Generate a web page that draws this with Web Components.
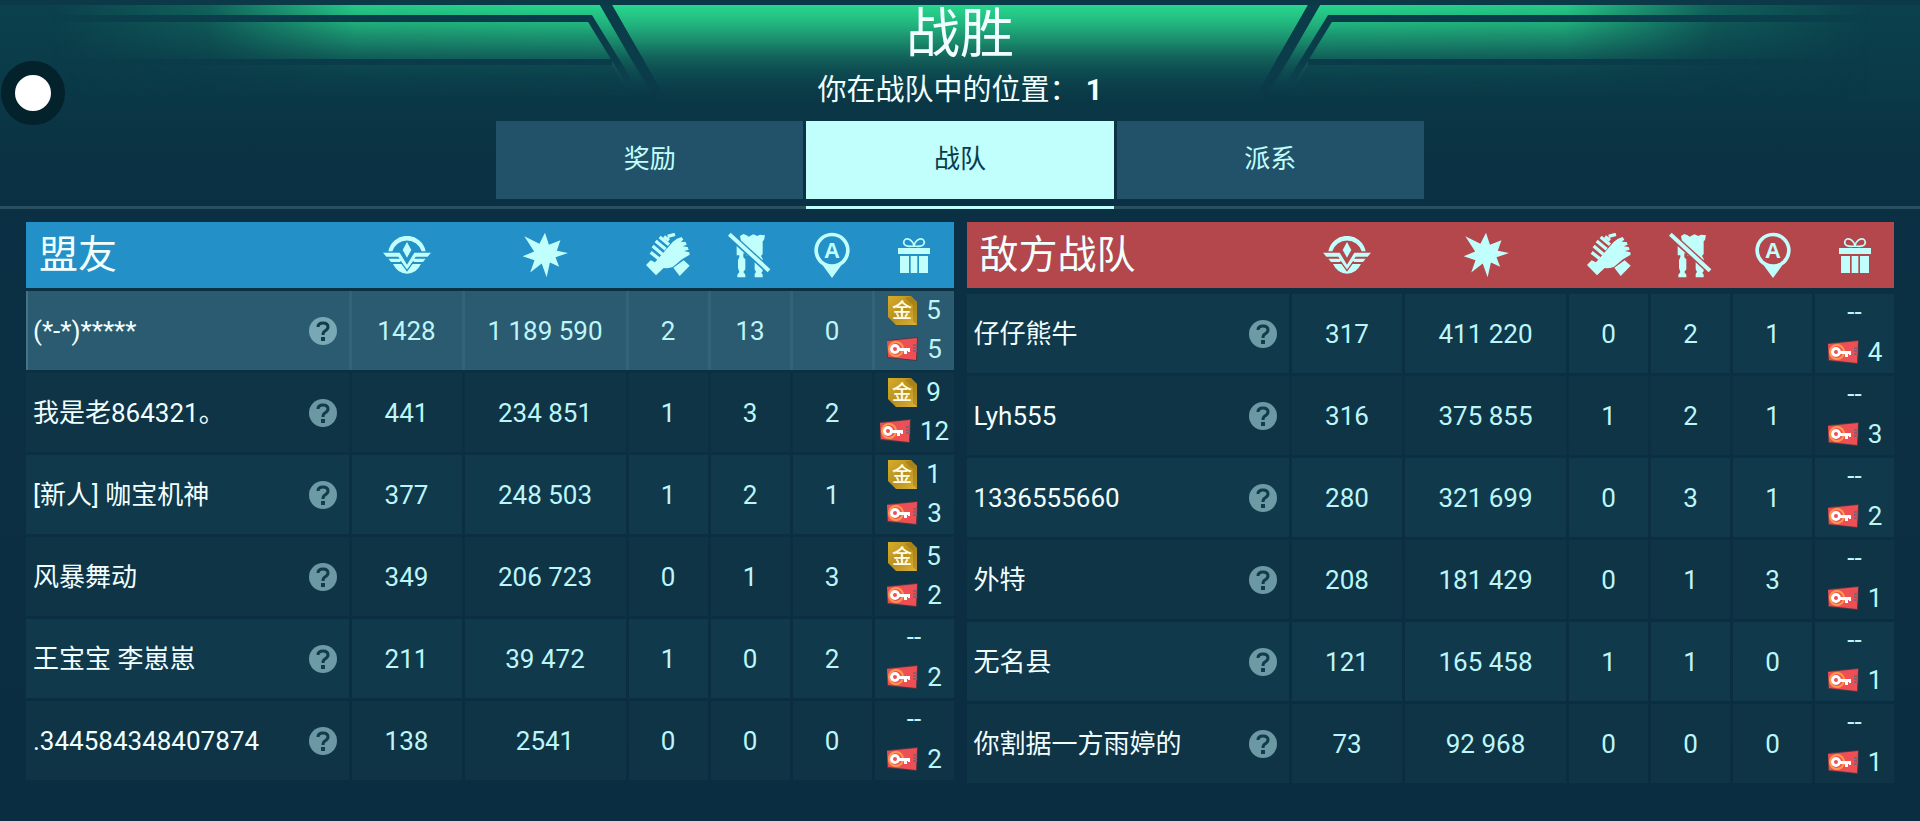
<!DOCTYPE html>
<html lang="zh-CN">
<head>
<meta charset="utf-8">
<meta name="viewport" content="width=device-width, initial-scale=1">
<title>战胜</title>
<style>
    :root {
        --ice: #c0fffb;
        --text: #f2ffff;
        --value: #bdf6f8;
        --tab: #22516a;
        --line: #28505f;
        --dark: #0b3c4a;
        --ally: #2490c8;
        --enemy: #b3474c;
        --row-odd: #10394b;
        --row-even: #0f3446;
        --row-own: #2b5b70;
    }

    html, body {
        margin: 0;
        min-height: 100%;
    }

    body {
        min-height: 100vh;
        background: linear-gradient(#0b414d 0, #0a3a48 80px, #0a3343 140px, #0b3044 210px, #0b2d42 100%);
        color: var(--text);
        font: 26px/32px Roboto, "Noto Sans CJK SC", sans-serif;
    }
</style>
</head>
<body>
<battle-results></battle-results>

<template id="battle-results">
    <style>
        :host {
            display: block;
            position: relative;
        }

        header {
            position: relative;
            text-align: center;
        }

        h1 {
            margin: 0;
            font-size: 54px;
            line-height: 70px;
            font-weight: 400;
        }

        .place {
            margin: 0;
            padding: 2px 0 13px;
            font-size: 29px;
            line-height: 36px;
        }

        main {
            display: flex;
            align-items: flex-start;
            gap: 13px;
            padding: 13px 26px 0;
        }

        team-table {
            flex: 1;
        }
    </style>
    <top-banner></top-banner>
    <header>
        <h1>战胜</h1>
        <p class="place">你在战队中的位置： <b>1</b></p>
        <tab-bar>
            <tab-item>奖励</tab-item>
            <tab-item active>战队</tab-item>
            <tab-item>派系</tab-item>
        </tab-bar>
    </header>
    <main>
        <team-table side="ally">盟友</team-table>
        <team-table side="enemy">敌方战队</team-table>
    </main>
    <touch-dot></touch-dot>
</template>

<template id="top-banner">
    <style>
        :host {
            display: block;
            position: absolute;
            inset: 0 0 auto;
        }

        svg {
            display: block;
            width: 100%;
        }
    </style>
    <svg viewBox="0 0 1920 110" aria-hidden="true">
        <defs>
            <linearGradient id="green" gradientUnits="userSpaceOnUse" x1="0" y1="5" x2="0" y2="100">
                <stop offset="0" stop-color="#28d88e"/>
                <stop offset=".2" stop-color="#22b57e"/>
                <stop offset=".4" stop-color="#1a8a6c" stop-opacity=".95"/>
                <stop offset=".56" stop-color="#146a5e" stop-opacity=".8"/>
                <stop offset=".75" stop-color="#105a58" stop-opacity=".4"/>
                <stop offset="1" stop-color="#0c4450" stop-opacity="0"/>
            </linearGradient>
            <linearGradient id="side" gradientUnits="userSpaceOnUse" x1="50" y1="0" x2="660" y2="0">
                <stop offset="0" stop-color="#fff" stop-opacity="0"/>
                <stop offset=".26" stop-color="#fff" stop-opacity=".22"/>
                <stop offset=".5" stop-color="#fff" stop-opacity=".9"/>
                <stop offset="1" stop-color="#fff"/>
            </linearGradient>
            <linearGradient id="down" gradientUnits="userSpaceOnUse" x1="0" y1="5" x2="0" y2="92">
                <stop offset="0" stop-color="#0b3c4a"/>
                <stop offset=".65" stop-color="#0b3c4a"/>
                <stop offset="1" stop-color="#0b3c4a" stop-opacity="0"/>
            </linearGradient>
            <mask id="fade" maskUnits="userSpaceOnUse" x="0" y="0" width="960" height="110">
                <rect width="960" height="110" fill="url(#side)"/>
            </mask>
            <g id="wing">
                <g mask="url(#fade)">
                    <path d="M40 5H600L656 100H40Z" fill="url(#green)"/>
                    <path d="M40 65H612L628 95H40Z" fill="#0b3c4a" opacity=".45"/>
                    <path d="M40 18.500H590L634 90" fill="none" stroke="url(#down)" stroke-width="7"/>
                    <path d="M40 62H612" stroke="#0b3c4a" stroke-width="6"/>
                </g>
                <path d="M600 5H612L662 92H650Z" fill="url(#down)"/>
            </g>
        </defs>
        <rect width="1920" height="5" fill="#0c3947"/>
        <path d="M612 5H1308L1254 100H666Z" fill="url(#green)"/>
        <use href="#wing"/>
        <use href="#wing" transform="translate(1920) scale(-1 1)"/>
    </svg>
</template>

<template id="tab-bar">
    <style>
        :host {
            display: block;
            border-bottom: 3px solid var(--line);
        }

        div {
            display: grid;
            grid-template-columns: repeat(3, 1fr);
            gap: 3px;
            max-width: 928px;
            margin: 0 auto;
            padding-bottom: 7px;
        }
    </style>
    <div role="tablist"><slot></slot></div>
</template>

<template id="tab-item">
    <style>
        :host {
            display: block;
            position: relative;
        }

        button {
            display: block;
            width: 100%;
            height: 78px;
            border: 0;
            padding: 0 0 2px;
            background: var(--tab);
            color: var(--ice);
            font: inherit;
            cursor: pointer;
        }

        :host([active]) button {
            background: var(--ice);
            color: var(--dark);
        }

        /* marker drawn over the bar's bottom line */
        :host([active])::after {
            content: "";
            position: absolute;
            inset: auto 0 -10px;
            height: 3px;
            background: var(--ice);
        }
    </style>
    <button type="button" role="tab"><slot></slot></button>
</template>

<template id="team-table">
    <style>
        :host {
            display: block;
            --head: var(--ally);
        }

        :host([side="enemy"]) {
            --head: var(--enemy);
        }

        table {
            width: 100%;
            table-layout: fixed;
            border-collapse: separate;
            border-spacing: 0;
        }

        .score { width: 113px; }
        .damage { width: 164px; }
        .small { width: 82px; }

        th {
            height: 66px;
            padding: 0 0 0 3px;
            background: var(--head);
            font-weight: 400;
        }

        th:first-child {
            padding-left: 13px;
            text-align: left;
            font-size: 39px;
            line-height: 48px;
        }

        td {
            height: 79px;
            padding: 0;
            border-top: 3px solid transparent;
            border-left: 3px solid transparent;
            background: var(--row-odd) padding-box;
            color: var(--value);
            text-align: center;
        }

        tr:nth-child(even) td {
            background-color: var(--row-even);
        }

        td:first-child {
            border-left: 0;
            color: var(--text);
        }

        :host([side="enemy"]) tr:first-child td {
            border-top-width: 6px;
        }

        tr.own td {
            background: linear-gradient(var(--row-own), var(--row-own)) padding-box, linear-gradient(transparent 3px, #316477 3px) border-box;
        }

        tr.own td:first-child {
            box-shadow: inset 2px 0 #437387;
        }

        .name {
            display: flex;
            align-items: center;
            justify-content: space-between;
            padding: 0 12px 0 7px;
        }

        .name button {
            display: flex;
            border: 0;
            padding: 0;
            background: none;
            color: rgba(170, 220, 225, .6);
            cursor: pointer;
        }

        .none {
            display: block;
            height: 39px;
            line-height: 35px;
        }
    </style>
    <table>
        <colgroup>
            <col><col class="score"><col class="damage">
            <col class="small"><col class="small"><col class="small"><col class="small">
        </colgroup>
        <thead>
            <tr>
                <th scope="col"><slot></slot></th>
                <th scope="col" aria-label="得分"><stat-icon name="wings"></stat-icon></th>
                <th scope="col" aria-label="伤害"><stat-icon name="burst"></stat-icon></th>
                <th scope="col" aria-label="助攻"><stat-icon name="hands"></stat-icon></th>
                <th scope="col" aria-label="击毁"><stat-icon name="robot"></stat-icon></th>
                <th scope="col" aria-label="信标"><stat-icon name="beacon"></stat-icon></th>
                <th scope="col" aria-label="奖励"><stat-icon name="gift"></stat-icon></th>
            </tr>
        </thead>
        <tbody></tbody>
    </table>
</template>

<template id="loot-item">
    <style>
        :host {
            display: flex;
            align-items: center;
            justify-content: center;
            gap: 9px;
            box-sizing: border-box;
            height: 39px;
            padding-bottom: 3px;
        }
    </style>
    <stat-icon></stat-icon><span><slot></slot></span>
</template>

<template id="touch-dot">
    <style>
        :host {
            position: absolute;
            top: 61px;
            left: 1px;
        }

        button {
            display: block;
            width: 64px;
            height: 64px;
            border: 14px solid #04222b;
            border-radius: 50%;
            padding: 0;
            background: #fff;
        }
    </style>
    <button type="button" aria-label="悬浮按钮"></button>
</template>

<script>
// [width, height, viewBox, markup]
const icons = {
    wings: [48, 38, '0 0 144 114', `
        <path d="M16 46A57 57 0 0 1 128 46H116A46 46 0 0 0 28 46Z"/>
        <path d="M72 18L85 42L72 65L59 42Z"/>
        <path d="M0 50H50L72 86L94 50H144L134 62H98L94 68H128L120 78H88L85 84H114Q100 113 72 113Q44 113 30 84H59L56 78H24L16 68H50L46 62H10Z"/>
        <path d="M52 76L72 104L92 76" fill="none" stroke="var(--head)" stroke-width="4"/>`],
    burst: [46, 46, '0 0 140 138', `
        <path d="M70 1L82 38L117 24L106 56L140 63L102 76L113 105L85 92L75 137L60 95L25 122L38 85L2 73L37 58L7 12L53 35Z"/>`],
    hands: [44, 44, '0 0 132 132', `
        <path d="M0 96L14 82L27 88L80 27Q92 15 107 12L112 20L104 26L119 27L122 35L110 40L125 42L128 50L114 54L130 58L131 65L108 79L84 99Q75 107 53 105L30 127Z"/>
        <path d="M82 104L113 82L131 98L101 129Z"/>
        <g fill="none" stroke="currentColor" stroke-width="10">
            <path d="M41 12L69 35M29 24L59 49M20 39L49 64M14 58L38 77"/>
            <path d="M54 11L69 22M65 10L87 4"/>
        </g>`],
    robot: [44, 46, '0 0 132 138', `
        <path d="M36 12L46 6L56 10L62 14L76 7L88 12L96 8L111 10L108 24L104 28V66L99 72L104 80V118L100 122L104 128V136H80V126L84 120L80 112V72H56V64H46V76L52 82V112L46 120L52 128V136H28V128L34 120L30 108V84L34 76V70H26V38L40 34Z"/>
        <path d="M2 6L124 117" stroke="var(--head)" stroke-width="21"/>
        <path d="M4 7L123 116" stroke="currentColor" stroke-width="12"/>`],
    beacon: [36, 46, '0 0 108 138', `
        <path d="M54 2A53 53 0 0 1 82 100L54 138L26 100A53 53 0 0 1 54 2Z"/>
        <circle cx="54" cy="55" r="42" fill="var(--head)"/>
        <text x="54" y="78" text-anchor="middle" font-family="Liberation Sans, sans-serif" font-size="66" font-weight="700">A</text>`],
    gift: [34, 36, '0 0 102 108', `
        <path d="M3 33H99V51H3ZM9 57H36V108H9ZM41 57H61V108H41ZM66 57H93V108H66Z"/>
        <path d="M51 27Q20 32 20 15Q24 1 39 8Q49 15 51 27Q53 15 63 8Q78 1 82 15Q82 32 51 27Z" fill="none" stroke="currentColor" stroke-width="5"/>`],
    help: [28, 28, '0 0 28 28', `
        <circle cx="14" cy="14" r="14"/>
        <path d="M9 10Q9 6 14 6Q19 6 19 10Q19 12 16 14Q14 15 14 18" fill="none" stroke="#123c4c" stroke-width="3"/>
        <path d="M12 20H16V24H12Z" fill="#123c4c"/>`],
    coin: [30, 30, '0 0 30 30', `
        <linearGradient id="gold" x2="1" y2="1">
            <stop offset="0" stop-color="#d9ad2b"/><stop offset=".5" stop-color="#b8901d"/><stop offset="1" stop-color="#dcb33a"/>
        </linearGradient>
        <path d="M1 1H24L30 7V30H9L1 22Z" fill="url(#gold)"/>
        <path d="M24 1L30 7V30L26 26V10L18 3Z" fill="#8e6c12" opacity=".4"/>
        <text x="15" y="23" text-anchor="middle" font-family="Noto Sans CJK SC, sans-serif" font-size="20" font-weight="500" fill="#fffbe6">金</text>`],
    card: [32, 24, '0 0 32 24', `
        <path d="M1 3L32 0L31 24L1 21Z" fill="#4c3945"/>
        <path d="M1 4L31 1L30 23L2 20Z" fill="#ee4f55"/>
        <circle cx="10" cy="12" r="7" fill="none" stroke="#ff9a4a" stroke-width="2"/>
        <circle cx="9" cy="12" r="3.500" fill="none" stroke="#fff" stroke-width="3"/>
        <path d="M12 11H24V15H22V14H21V17H18V14H12Z" fill="#fff"/>
        <path d="M27 8H31M27 11H31M27 14H31" stroke="#8a6070" stroke-width="2"/>`]
};

// name, score, damage, assists, kills, beacons, gold, keys
const teams = {
    ally: [
        ['(*-*)*****', '1428', '1 189 590', 2, 13, 0, 5, 5],
        ['我是老864321。', '441', '234 851', 1, 3, 2, 9, 12],
        ['[新人] 咖宝机神', '377', '248 503', 1, 2, 1, 1, 3],
        ['风暴舞动', '349', '206 723', 0, 1, 3, 5, 2],
        ['王宝宝 李崽崽', '211', '39 472', 1, 0, 2, 0, 2],
        ['.344584348407874', '138', '2541', 0, 0, 0, 0, 2]
    ],
    enemy: [
        ['仔仔熊牛', '317', '411 220', 0, 2, 1, 0, 4],
        ['Lyh555', '316', '375 855', 1, 2, 1, 0, 3],
        ['1336555660', '280', '321 699', 0, 3, 1, 0, 2],
        ['外特', '208', '181 429', 0, 1, 3, 0, 1],
        ['无名县', '121', '165 458', 1, 1, 0, 0, 1],
        ['你割据一方雨婷的', '73', '92 968', 0, 0, 0, 0, 1]
    ]
};

class BaseElement extends HTMLElement {
    constructor() {
        super();
        const template = document.getElementById(this.localName);
        this.attachShadow({ mode: 'open' });
        if (template) {
            this.shadowRoot.appendChild(template.content.cloneNode(true));
        }
    }
}

class StatIcon extends BaseElement {
    static observedAttributes = ['name'];

    attributeChangedCallback() {
        const [width, height, box, markup] = icons[this.getAttribute('name')];
        this.shadowRoot.innerHTML = `
            <style>
                :host { display: inline-flex; vertical-align: middle; color: var(--ice); }
                :host([name="help"]) { color: inherit; }
                svg { display: block; fill: currentColor; }
            </style>
            <svg width="${width}" height="${height}" viewBox="${box}" aria-hidden="true">${markup}</svg>`;
    }
}

class LootItem extends BaseElement {
    connectedCallback() {
        this.shadowRoot.querySelector('stat-icon').setAttribute('name', this.getAttribute('kind'));
    }
}

class TabItem extends BaseElement {
    connectedCallback() {
        this.shadowRoot.querySelector('button').setAttribute('aria-selected', this.hasAttribute('active'));
    }
}

class TeamTable extends BaseElement {
    connectedCallback() {
        const side = this.getAttribute('side');
        this.shadowRoot.querySelector('tbody').innerHTML = teams[side].map(([name, ...row], i) => {
            const [gold, keys] = row.splice(5);
            return `
                <tr class="${side === 'ally' && i === 0 ? 'own' : ''}">
                    <td><div class="name"><span>${name}</span><button type="button" aria-label="玩家信息"><stat-icon name="help"></stat-icon></button></div></td>
                    ${row.map(value => `<td>${value}</td>`).join('')}
                    <td>
                        ${gold ? `<loot-item kind="coin">${gold}</loot-item>` : '<span class="none">--</span>'}
                        <loot-item kind="card">${keys}</loot-item>
                    </td>
                </tr>`;
        }).join('');
    }
}

customElements.define('stat-icon', StatIcon);
customElements.define('loot-item', LootItem);
customElements.define('tab-item', TabItem);
customElements.define('tab-bar', class extends BaseElement {});
customElements.define('top-banner', class extends BaseElement {});
customElements.define('touch-dot', class extends BaseElement {});
customElements.define('team-table', TeamTable);
customElements.define('battle-results', class extends BaseElement {});
</script>
</body>
</html>
